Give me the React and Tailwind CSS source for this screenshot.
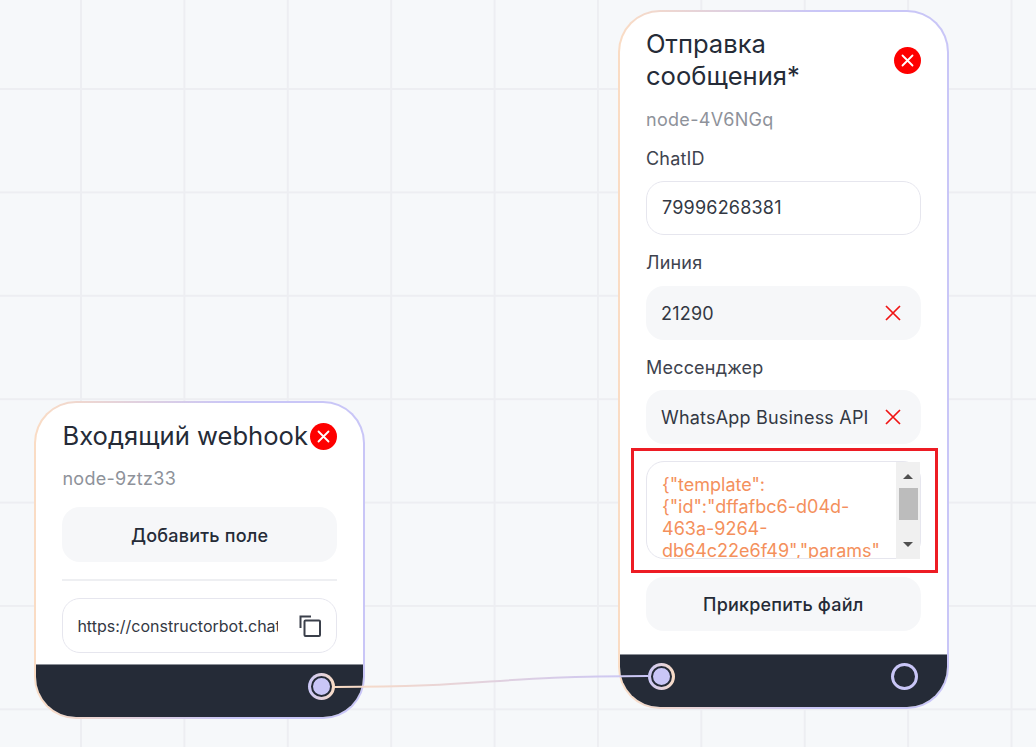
const font = "font-['Inter','Noto_Sans',sans-serif]";

const DeleteButton = () => (
  <div className="flex h-[27px] w-[27px] shrink-0 items-center justify-center rounded-full bg-[#fe0000]">
    <svg width="13" height="13" viewBox="0 0 13 13" fill="none">
      <path d="M1.5 1.5l10 10M11.5 1.5l-10 10" stroke="#fff" strokeWidth="1.8" strokeLinecap="round" />
    </svg>
  </div>
);

const ClearIcon = () => (
  <svg width="18" height="18" viewBox="0 0 18 18" fill="none">
    <path d="M2 2l14 14M16 2L2 16" stroke="#f01414" strokeWidth="1.7" />
  </svg>
);

const CopyIcon = () => (
  <svg width="24" height="24" viewBox="0 0 24 24" fill="none">
    <path d="M2.5 14V2.5H13" stroke="#3a3f4a" strokeWidth="2" />
    <rect x="6.5" y="6.5" width="15.5" height="15.5" rx="1" stroke="#3a3f4a" strokeWidth="2" />
  </svg>
);

const Field = ({ children, className = '' }) => (
  <div className={`flex h-[54px] items-center rounded-[18px] px-[15px] text-[18px] tracking-[0.2px] text-[#333843] ${className}`}>
    {children}
  </div>
);

const SelectField = ({ value }) => (
  <Field className="justify-between bg-[#f6f7f9] pr-[19px]">
    <span className="whitespace-nowrap">{value}</span>
    <ClearIcon />
  </Field>
);

const Label = ({ children, className = '' }) => (
  <div className={`text-[18px] leading-[24px] tracking-[0.2px] text-[#3e434e] ${className}`}>{children}</div>
);

const ActionButton = ({ children, className = '' }) => (
  <div className={`flex h-[54px] items-center justify-center rounded-[18px] bg-[#f6f7f9] text-[18px] font-[450] tracking-[0.2px] text-[#252b37] ${className}`}>
    {children}
  </div>
);

const Handle = ({ filled, className = '' }) => (
  <div className={`absolute h-[27px] w-[27px] rounded-full p-[3px] ${filled ? 'bg-[linear-gradient(90deg,#c9c6f7,#fadcc4)]' : 'bg-[#c9c6f7]'} ${className}`}>
    <div className={`h-full w-full rounded-full border-[2.5px] border-[#252b37] ${filled ? 'bg-[#c9c6f7]' : 'bg-[#252b37]'}`} />
  </div>
);

const NodeCard = ({ className = '', footer, children }) => (
  <div className={`absolute w-[330.5px] rounded-[42px] bg-[linear-gradient(90deg,#fadcc4,#c9c6f7_60%)] p-[2px] ${className}`}>
    <div className="overflow-hidden rounded-[40px] bg-white">
      <div className="px-[26px]">{children}</div>
      <div className="relative h-[53px] border-t border-[#8b8f97] bg-[#252b37]">{footer}</div>
    </div>
  </div>
);

const ScrollBar = () => (
  <div className="absolute right-0 top-0 flex h-[97px] w-[24px] flex-col items-center justify-between bg-[#f0f0f0] py-[12px]">
    <svg width="10" height="5" viewBox="0 0 10 5"><path d="M5 0l5 5H0z" fill="#505050" /></svg>
    <div className="absolute left-[3px] top-[26px] h-[32px] w-[19px] bg-[#bcbcbc]" />
    <svg width="10" height="5" viewBox="0 0 10 5"><path d="M0 0h10L5 5z" fill="#505050" /></svg>
  </div>
);

export default function App() {
  return (
    <div className={`relative h-[747px] w-[1036px] overflow-hidden bg-[#f6f8fa] bg-[linear-gradient(#edeef2_2px,transparent_2px),linear-gradient(90deg,#edeef2_2px,transparent_2px)] bg-[size:103.4px_103.4px] bg-[position:80px_88px] ${font}`}>
      <NodeCard className="left-[34.4px] top-[401px]" footer={<Handle filled className="left-[271.6px] top-[8px]" />}>
        <div className="flex h-[44px] items-center justify-between pt-[22px] whitespace-nowrap">
          <div className="text-[25.6px] leading-[32px] text-[#252b37]">Входящий webhook</div>
          <DeleteButton />
        </div>
        <div className="mt-[20px] text-[18px] leading-[24px] tracking-[0.3px] text-[#8e929a]">node-9ztz33</div>
        <ActionButton className="mt-[16px] h-[55px] pt-[1px]">Добавить поле</ActionButton>
        <div className="mt-[17px] h-[2px] bg-[#eeeff2]" />
        <Field className="mt-[17px] h-[55px] justify-between border border-[#e6e6ee] pl-[14px] pr-[14px]">
          <span className="w-[201px] overflow-hidden whitespace-nowrap text-[16px] tracking-normal">https://constructorbot.chat/webhook</span>
          <CopyIcon />
        </Field>
        <div className="h-[11px]" />
      </NodeCard>

      <NodeCard
        className="left-[618px] top-[10px]"
        footer={
          <>
            <Handle filled className="left-[28px] top-[8px]" />
            <Handle className="left-[271px] top-[8px]" />
          </>
        }
      >
        <div className="flex items-center justify-between pt-[16px]">
          <div className="text-[25.6px] leading-[32px] text-[#252b37]">
            Отправка
            <br />
            сообщения*
          </div>
          <DeleteButton />
        </div>
        <div className="mt-[16px] text-[18px] leading-[24px] tracking-[0.3px] text-[#8e929a]">node-4V6NGq</div>
        <Label className="mt-[15px]">ChatID</Label>
        <Field className="mt-[10px] border border-[#e6e6ee] pb-[1px]">79996268381</Field>
        <Label className="mt-[16px]">Линия</Label>
        <div className="mt-[11px]"><SelectField value="21290" /></div>
        <Label className="mt-[16px]">Мессенджер</Label>
        <div className="mt-[10px]"><SelectField value="WhatsApp Business API" /></div>
        <div className="relative mt-[17px] h-[98px] rounded-[18px] border border-[#e6e6ee]">
          <div className="h-full overflow-hidden rounded-[17px] pl-[15px] pr-[24px] pt-[12px] text-[18px] leading-[22px] text-[#f4905c]">
            <div className="whitespace-nowrap">
              {'{"template":'}
              <br />
              {'{"id":"dffafbc6-d04d-'}
              <br />
              {'463a-9264-'}
              <br />
              {'db64c22e6f49","params"'}
            </div>
          </div>
          <ScrollBar />
        </div>
        <ActionButton className="mt-[18px]">Прикрепить файл</ActionButton>
        <div className="h-[23px]" />
      </NodeCard>

      {/* edge between the two nodes */}
      <svg className="absolute left-0 top-0" width="1036" height="747" fill="none">
        <defs>
          <linearGradient id="edge" gradientUnits="userSpaceOnUse" x1="334" y1="0" x2="648" y2="0">
            <stop offset="0" stopColor="#fadcc4" />
            <stop offset="1" stopColor="#c9c6f7" />
          </linearGradient>
        </defs>
        <path d="M334 687C490 687 490 676 648 676" stroke="url(#edge)" strokeWidth="2" />
      </svg>

      {/* highlight drawn over the screenshot */}
      <div className="absolute left-[631px] top-[448px] h-[125px] w-[307px] border-[3px] border-[#ed1c24]" />
    </div>
  );
}
